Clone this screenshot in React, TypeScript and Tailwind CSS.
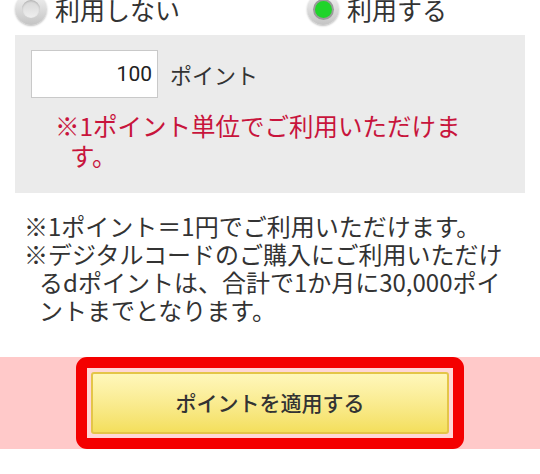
import React, { useState } from "react";

const jp = "font-['Noto_Sans_CJK_JP','Noto_Sans',sans-serif]";

function Radio({ checked }: { checked: boolean }) {
  return (
    <span className="flex h-[32px] w-[32px] shrink-0 items-center justify-center rounded-full bg-gradient-to-b from-[#f4f4f4] to-[#c4c4c4] shadow-[0_1px_2px_rgba(0,0,0,0.25)]">
      {checked ? (
        <span className="h-[17px] w-[17px] rounded-full bg-[#1fd42a] shadow-[0_0_0_2px_#9a9a9a]" />
      ) : (
        <span className="h-[18px] w-[18px] rounded-full bg-gradient-to-b from-[#d6d6d6] to-[#efefef] shadow-[inset_0_1px_2px_rgba(0,0,0,0.2)]" />
      )}
    </span>
  );
}

export default function App() {
  const [use, setUse] = useState(true);
  const [points, setPoints] = useState("100");

  return (
    <div className={`min-h-[474px] w-[540px] overflow-hidden bg-white text-[#333] ${jp}`}>
      {/* radio row, cropped at the top */}
      <div className="-mt-[8px] flex h-[34px] items-center px-[15px]">
        <button
          onClick={() => setUse(false)}
          className="flex w-[292px] items-center gap-[8px]"
        >
          <Radio checked={!use} />
          <span className="text-[25px] leading-none">利用しない</span>
        </button>
        <button onClick={() => setUse(true)} className="flex items-center gap-[8px]">
          <Radio checked={use} />
          <span className="text-[25px] leading-none">利用する</span>
        </button>
      </div>

      {/* point input box */}
      <div className="mx-[15px] mt-[9px] bg-[#ebebeb] pb-[22px] pl-[16px] pr-[48px] pt-[15px]">
        <div className="flex items-center gap-[12px]">
          <input
            value={points}
            onChange={(e) => setPoints(e.target.value)}
            className="h-[48px] w-[127px] border border-[#c9c9c9] bg-white px-[5px] text-right font-['Roboto',sans-serif] text-[21px] text-[#222] outline-none"
          />
          <span className="text-[22px]">ポイント</span>
        </div>
        <p className="mt-[13px] pl-[39px] -indent-[15px] text-[24.5px] leading-[30px] text-[#c8143c]">
          ※1ポイント単位でご利用いただけます。
        </p>
      </div>

      {/* notes */}
      <div className="mt-[19px] pl-[24px] pr-[24px] text-[24px] leading-[28px]">
        <p>※1ポイント＝1円でご利用いただけます。</p>
        <p className="pl-[15px] -indent-[15px]">
          ※デジタルコードのご購入にご利用いただけるdポイントは、合計で1か月に30,000ポイントまでとなります。
        </p>
      </div>

      {/* apply button */}
      <div className="mt-[33px] flex h-[92px] justify-center bg-[#ffc9c9]">
        <div className="w-[388px] rounded-[11px] border-[11px] border-[#f40000] bg-[#ffd6d6] p-[4px]">
          <button className="flex h-[62px] w-full items-center justify-center rounded-[3px] border-2 border-[#e4c548] bg-gradient-to-b from-[#fff7bb] to-[#f4df5c] text-[21px] font-medium text-[#333]">
            ポイントを適用する
          </button>
        </div>
      </div>
    </div>
  );
}
